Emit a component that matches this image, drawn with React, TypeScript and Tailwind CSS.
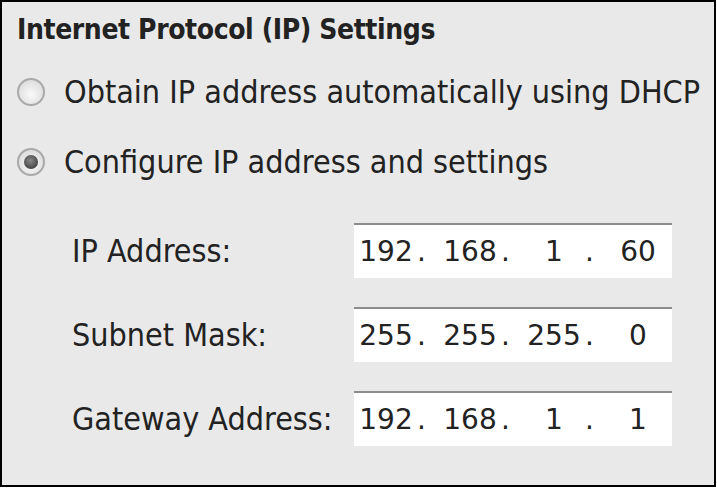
import React from "react";

const body = { fontFamily: '"DejaVu Sans Condensed", "DejaVu Sans", sans-serif' };
const mono = { fontFamily: '"DejaVu Sans", sans-serif' };

const Radio = ({ checked }: { checked?: boolean }) => (
  <span className="flex h-[28px] w-[28px] shrink-0 items-center justify-center rounded-full border-2 border-[#a9a9a9] bg-[radial-gradient(circle_at_50%_60%,#fafafa,#d4d4d4)]">
    {checked && (
      <span className="h-[14px] w-[14px] rounded-full bg-[radial-gradient(circle_at_45%_40%,#8a8a8a,#2a2a2a)]" />
    )}
  </span>
);

const IpBox = ({ parts }: { parts: string[] }) => (
  <div
    className="flex h-[55px] w-[318px] items-center border-t-2 border-t-[#8c8c8c] bg-white pl-[1px] text-[28px] text-[#222]"
    style={mono}
  >
    {parts.map((p, i) => (
      <React.Fragment key={i}>
        <span className="w-[62px] text-center">{p}</span>
        {i < 3 && <span className="w-[22px] text-left">.</span>}
      </React.Fragment>
    ))}
  </div>
);

const fields = [
  { label: "IP Address:", parts: ["192", "168", "1", "60"] },
  { label: "Subnet Mask:", parts: ["255", "255", "255", "0"] },
  { label: "Gateway Address:", parts: ["192", "168", "1", "1"] },
];

export default function App() {
  return (
    <div className="h-[488px] w-[717px] bg-white">
      <div
        className="flex h-[487px] w-[716px] flex-col border-2 border-black bg-[#e9e9e9] pl-[15px] pt-[11px] text-[#222]"
        style={body}
      >
        <div className="text-[28px] font-bold leading-[34px] tracking-[-0.4px]">
          Internet Protocol (IP) Settings
        </div>

        <div className="mt-[29px] flex flex-col gap-[38px] text-[32px] leading-[32px]">
          <label className="flex items-center gap-[19px]">
            <Radio />
            <span>Obtain IP address automatically using DHCP</span>
          </label>
          <label className="flex items-center gap-[19px]">
            <Radio checked />
            <span>Configure IP address and settings</span>
          </label>
        </div>

        <div className="mt-[45px] flex flex-col gap-[29px] pl-[55px] text-[32px]">
          {fields.map((f) => (
            <div key={f.label} className="flex items-center">
              <span className="w-[282px]">{f.label}</span>
              <IpBox parts={f.parts} />
            </div>
          ))}
        </div>
      </div>
    </div>
  );
}
